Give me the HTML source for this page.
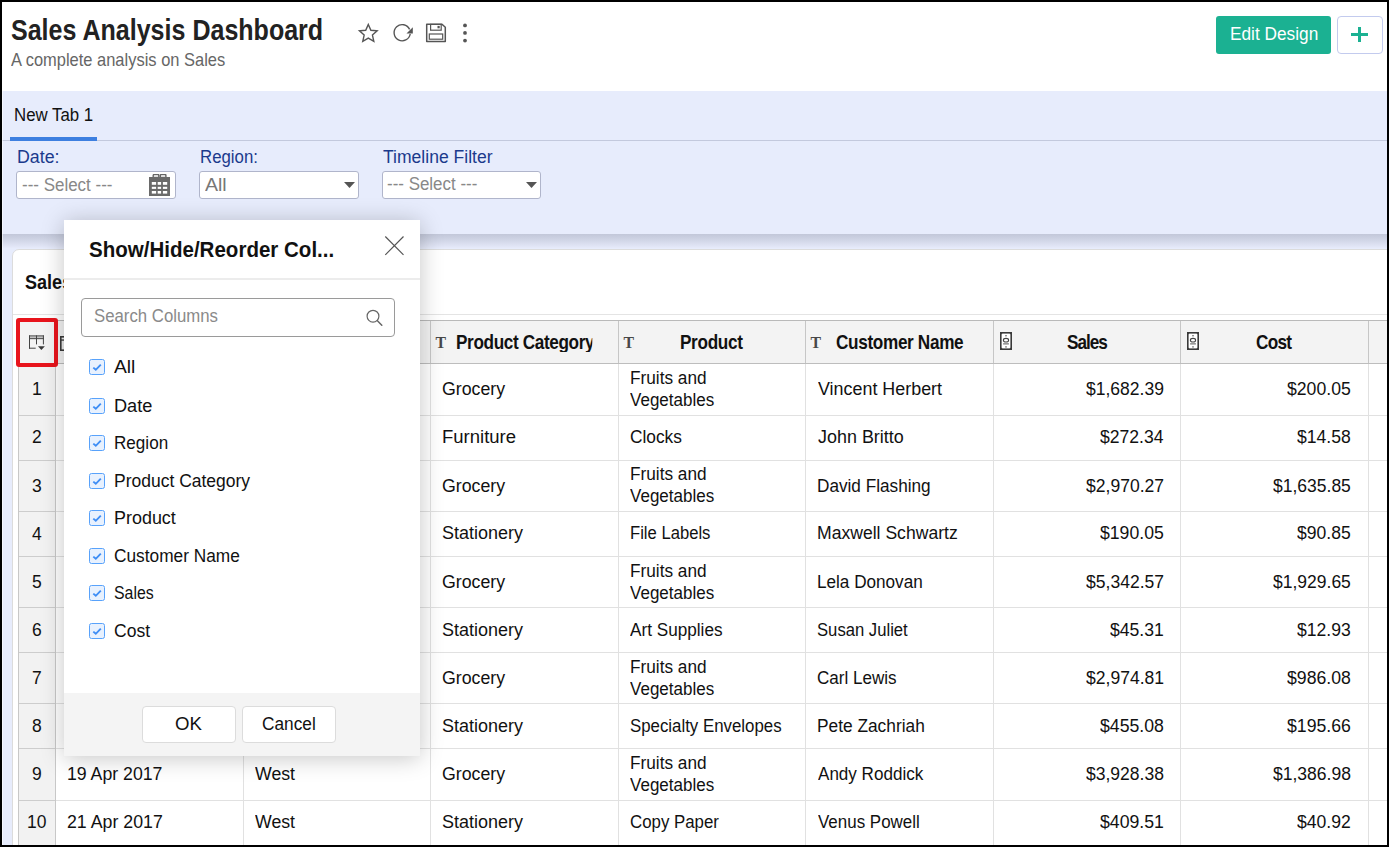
<!DOCTYPE html>
<html lang="en"><head><meta charset="utf-8"><title>Sales Analysis Dashboard</title>
<style>
html,body{margin:0;padding:0;}
body{width:1389px;height:847px;overflow:hidden;position:relative;background:#e7ecfc;font-family:"Liberation Sans",sans-serif;}
.b{position:absolute;display:block;}
.t{position:absolute;white-space:pre;line-height:1;transform-origin:0 0;display:block;}
</style></head><body>
<div class="b" style="left:0px;top:0px;width:1389px;height:91px;background:#fff;"></div>
<div class="b" style="left:0px;top:91px;width:1389px;height:143px;background:#e7ecfc;"></div>
<div class="b" style="left:0px;top:140px;width:1389px;height:1px;background:#c3c9dd;"></div>
<div class="b" style="left:10px;top:137px;width:87px;height:4px;background:#3d7fe0;"></div>
<div class="b" style="left:0px;top:234px;width:1389px;height:14px;background:linear-gradient(#c2c7d9,#cfd4e5 40%,#e6eafa);"></div>
<div class="b" style="left:16px;top:171px;width:160px;height:28px;background:#fff;border:1px solid #b0b5cb;border-radius:3px;box-sizing:border-box;"></div>
<div class="b" style="left:199px;top:171px;width:160px;height:28px;background:#fff;border:1px solid #b0b5cb;border-radius:3px;box-sizing:border-box;"></div>
<div class="b" style="left:382px;top:171px;width:159px;height:28px;background:#fff;border:1px solid #b0b5cb;border-radius:3px;box-sizing:border-box;"></div>
<svg class="b" style="left:344px;top:182px" width="11" height="6"><path d="M0 0H11L5.5 6Z" fill="#555"/></svg>
<svg class="b" style="left:526px;top:182px" width="11" height="6"><path d="M0 0H11L5.5 6Z" fill="#555"/></svg>
<svg class="b" style="left:149px;top:174px" width="21" height="22" viewBox="0 0 21 22">
<rect x="4.2" y="0.3" width="5.6" height="5" rx="1.2" fill="#ddd" stroke="#666" stroke-width="1.4"/>
<rect x="11.3" y="0.3" width="5.6" height="5" rx="1.2" fill="#ddd" stroke="#666" stroke-width="1.4"/>
<rect x="0" y="3" width="21" height="19" fill="#6a6a6a"/>
<g fill="#fff"><rect x="2.8" y="8" width="4.3" height="2.8"/><rect x="8.7" y="8" width="3.4" height="2.8"/><rect x="13.9" y="8" width="4.3" height="2.8"/>
<rect x="2.8" y="12.8" width="4.3" height="2.1"/><rect x="8.7" y="12.8" width="3.4" height="2.1"/><rect x="13.9" y="12.8" width="4.3" height="2.1"/>
<rect x="2.8" y="17" width="4.3" height="2.6"/><rect x="8.7" y="17" width="3.4" height="2.6"/><rect x="13.9" y="17" width="4.3" height="2.6"/></g></svg>
<svg class="b" style="left:357.1px;top:21.7px" width="22.6" height="22.6" viewBox="0 0 24 24"><path d="M12 2.6l2.75 6.2 6.65.65-5 4.45 1.45 6.6L12 17.05 6.15 20.5l1.45-6.6-5-4.45 6.65-.65z" fill="none" stroke="#555" stroke-width="1.5" stroke-linejoin="miter"/></svg>
<svg class="b" style="left:391px;top:21px" width="24" height="22" viewBox="0 0 24 22"><path d="M18.6 8.4A8.1 8.1 0 1 0 19.2 13" fill="none" stroke="#555" stroke-width="1.4"/><path d="M21.8 6.2v6.3h-6.3z" fill="#555"/></svg>
<svg class="b" style="left:425px;top:22px" width="22" height="22" viewBox="0 0 22 22"><path d="M1.7 2.2h15.3l3.3 3v14.2H1.7z" fill="none" stroke="#555" stroke-width="1.5" stroke-linejoin="round"/><rect x="5.6" y="2.4" width="10.6" height="5.8" fill="none" stroke="#555" stroke-width="1.2"/><rect x="12.5" y="3.9" width="2.2" height="2.4" fill="#555"/><rect x="4.3" y="12" width="13.4" height="5.2" fill="none" stroke="#555" stroke-width="1.2"/></svg>
<svg class="b" style="left:461px;top:22px" width="8" height="22" viewBox="0 0 8 22"><circle cx="4" cy="3.4" r="1.9" fill="#555"/><circle cx="4" cy="10.9" r="1.9" fill="#555"/><circle cx="4" cy="18.6" r="1.9" fill="#555"/></svg>
<div class="b" style="left:1216px;top:16px;width:115px;height:38px;background:#1bb192;border-radius:3px;"></div>
<div class="b" style="left:1337px;top:16px;width:46px;height:38px;background:#fff;border:1px solid #c3cbee;border-radius:4px;box-sizing:border-box;"></div>
<div class="b" style="left:1351px;top:33.1px;width:17px;height:2.6px;background:#1bb192;"></div>
<div class="b" style="left:1358.2px;top:26.7px;width:2.6px;height:15.4px;background:#1bb192;"></div>
<div class="b" style="left:12px;top:249px;width:1400px;height:620px;background:#fff;border:1px solid #dcdcdc;border-radius:7px;box-sizing:border-box;"></div>
<div class="b" style="left:13px;top:314px;width:1380px;height:1px;background:#e4e4e4;"></div>
<div class="b" style="left:18px;top:320px;width:1372px;height:44px;background:#f3f3f3;border-top:1px solid #b9b9b9;border-bottom:1px solid #bdbdbd;box-sizing:border-box;"></div>
<div class="b" style="left:18px;top:364px;width:38px;height:490px;background:#f2f2f2;"></div>
<div class="b" style="left:18px;top:415px;width:1372px;height:1px;background:#e1e1e1;"></div>
<div class="b" style="left:18px;top:415px;width:38px;height:1px;background:#cdcdcd;"></div>
<div class="b" style="left:18px;top:460px;width:1372px;height:1px;background:#e1e1e1;"></div>
<div class="b" style="left:18px;top:460px;width:38px;height:1px;background:#cdcdcd;"></div>
<div class="b" style="left:18px;top:511px;width:1372px;height:1px;background:#e1e1e1;"></div>
<div class="b" style="left:18px;top:511px;width:38px;height:1px;background:#cdcdcd;"></div>
<div class="b" style="left:18px;top:556px;width:1372px;height:1px;background:#e1e1e1;"></div>
<div class="b" style="left:18px;top:556px;width:38px;height:1px;background:#cdcdcd;"></div>
<div class="b" style="left:18px;top:607px;width:1372px;height:1px;background:#e1e1e1;"></div>
<div class="b" style="left:18px;top:607px;width:38px;height:1px;background:#cdcdcd;"></div>
<div class="b" style="left:18px;top:652px;width:1372px;height:1px;background:#e1e1e1;"></div>
<div class="b" style="left:18px;top:652px;width:38px;height:1px;background:#cdcdcd;"></div>
<div class="b" style="left:18px;top:703px;width:1372px;height:1px;background:#e1e1e1;"></div>
<div class="b" style="left:18px;top:703px;width:38px;height:1px;background:#cdcdcd;"></div>
<div class="b" style="left:18px;top:748px;width:1372px;height:1px;background:#e1e1e1;"></div>
<div class="b" style="left:18px;top:748px;width:38px;height:1px;background:#cdcdcd;"></div>
<div class="b" style="left:18px;top:800px;width:1372px;height:1px;background:#e1e1e1;"></div>
<div class="b" style="left:18px;top:800px;width:38px;height:1px;background:#cdcdcd;"></div>
<div class="b" style="left:18px;top:845px;width:1372px;height:1px;background:#e1e1e1;"></div>
<div class="b" style="left:18px;top:845px;width:38px;height:1px;background:#cdcdcd;"></div>
<div class="b" style="left:18px;top:364px;width:1px;height:490px;background:#c8c8c8;"></div>
<div class="b" style="left:18px;top:321px;width:1px;height:42px;background:#bcbcbc;"></div>
<div class="b" style="left:55px;top:364px;width:1px;height:490px;background:#c8c8c8;"></div>
<div class="b" style="left:55px;top:321px;width:1px;height:42px;background:#bcbcbc;"></div>
<div class="b" style="left:243px;top:364px;width:1px;height:490px;background:#e1e1e1;"></div>
<div class="b" style="left:243px;top:321px;width:1px;height:42px;background:#c6c6c6;"></div>
<div class="b" style="left:430px;top:364px;width:1px;height:490px;background:#e1e1e1;"></div>
<div class="b" style="left:430px;top:321px;width:1px;height:42px;background:#c6c6c6;"></div>
<div class="b" style="left:618px;top:364px;width:1px;height:490px;background:#e1e1e1;"></div>
<div class="b" style="left:618px;top:321px;width:1px;height:42px;background:#c6c6c6;"></div>
<div class="b" style="left:805px;top:364px;width:1px;height:490px;background:#e1e1e1;"></div>
<div class="b" style="left:805px;top:321px;width:1px;height:42px;background:#c6c6c6;"></div>
<div class="b" style="left:993px;top:364px;width:1px;height:490px;background:#e1e1e1;"></div>
<div class="b" style="left:993px;top:321px;width:1px;height:42px;background:#c6c6c6;"></div>
<div class="b" style="left:1180px;top:364px;width:1px;height:490px;background:#e1e1e1;"></div>
<div class="b" style="left:1180px;top:321px;width:1px;height:42px;background:#c6c6c6;"></div>
<div class="b" style="left:1368px;top:364px;width:1px;height:490px;background:#e1e1e1;"></div>
<div class="b" style="left:1368px;top:321px;width:1px;height:42px;background:#c6c6c6;"></div>
<svg class="b" style="left:1000px;top:332px" width="12" height="18" viewBox="0 0 12 18"><rect x=".8" y=".8" width="10.4" height="16.4" fill="#fff" stroke="#3a3a3a" stroke-width="1.6"/><path d="M0 0h3.6L0 3.6zM12 0v3.6L8.4 0zM0 18v-3.6L3.6 18zM12 18H8.400l3.600-3.600z" fill="#3a3a3a"/><ellipse cx="6" cy="8.2" rx="2.6" ry="1.8" fill="none" stroke="#444" stroke-width="1.1"/><rect x="3.1" y="11.4" width="5.800" height="1" fill="#555"/><rect x="5.3" y="3" width="1.4" height="1.4" fill="#666"/><rect x="5.3" y="14.200" width="1.4" height="1.4" fill="#666"/></svg>
<svg class="b" style="left:1187px;top:332px" width="12" height="18" viewBox="0 0 12 18"><rect x=".8" y=".8" width="10.4" height="16.4" fill="#fff" stroke="#3a3a3a" stroke-width="1.6"/><path d="M0 0h3.6L0 3.6zM12 0v3.6L8.4 0zM0 18v-3.6L3.6 18zM12 18H8.400l3.600-3.600z" fill="#3a3a3a"/><ellipse cx="6" cy="8.2" rx="2.6" ry="1.8" fill="none" stroke="#444" stroke-width="1.1"/><rect x="3.1" y="11.4" width="5.800" height="1" fill="#555"/><rect x="5.3" y="3" width="1.4" height="1.4" fill="#666"/><rect x="5.3" y="14.200" width="1.4" height="1.4" fill="#666"/></svg>
<svg class="b" style="left:60px;top:336px" width="12" height="15"><rect x=".8" y=".8" width="10.4" height="13.4" fill="#eee" stroke="#3a3a3a" stroke-width="1.6"/><rect x="1" y="3.4" width="10" height="1.3" fill="#3a3a3a"/></svg>
<svg class="b" style="left:29px;top:334.5px" width="17" height="16" viewBox="0 0 17 16"><rect x=".5" y="1.3" width="14" height="2.1" fill="#c2c2c2"/><path d="M0 .9H14.9M0 3.65H14.9M.5 .4V13.7M0 13.2H6.7M7.5 .4V9.4M14.4 .4V9.4" fill="none" stroke="#444" stroke-width="1"/><path d="M8.9 11.3h7l-3.5 3.7z" fill="#3a3a3a"/></svg>
<div class="b" style="left:16px;top:318px;width:42px;height:49px;border:4px solid #e8141c;border-radius:3px;box-sizing:border-box;z-index:5;"></div>
<div class="b" style="left:64px;top:220px;width:356px;height:536px;background:#fff;box-shadow:0 2px 22px rgba(0,0,0,.23);z-index:10;"></div>
<div class="b" style="left:64px;top:278px;width:356px;height:2px;background:#ececec;z-index:11;"></div>
<div class="b" style="left:64px;top:693px;width:356px;height:63px;background:#f4f4f4;z-index:11;"></div>
<div class="b" style="left:81px;top:298px;width:314px;height:39px;background:#fff;border:1px solid #9a9a9a;border-radius:4px;box-sizing:border-box;z-index:12;"></div>
<svg class="b" style="left:365px;top:308px;z-index:13" width="20" height="20" viewBox="0 0 20 20"><circle cx="8" cy="8.2" r="5.9" fill="none" stroke="#666" stroke-width="1.2"/><path d="M12.4 12.8L16.8 17.2" stroke="#666" stroke-width="1.5" stroke-linecap="round"/></svg>
<svg class="b" style="left:384px;top:235px;z-index:13" width="21" height="21" viewBox="0 0 21 21"><path d="M1.3 1.5L19.5 19.8M19.5 1.5L1.3 19.8" stroke="#555" stroke-width="1.2"/></svg>
<div class="b" style="left:89px;top:359px;width:16px;height:16px;box-sizing:border-box;border:1px solid #58a2fb;border-radius:2.5px;background:#e8f1fe;z-index:12"><svg width="14" height="14" viewBox="0 0 14 14" style="display:block"><path d="M3.3 7.6L5.8 9.8L10.8 4.6" fill="none" stroke="#3f8ef5" stroke-width="1.9"/></svg></div>
<div class="b" style="left:89px;top:398px;width:16px;height:16px;box-sizing:border-box;border:1px solid #58a2fb;border-radius:2.5px;background:#e8f1fe;z-index:12"><svg width="14" height="14" viewBox="0 0 14 14" style="display:block"><path d="M3.3 7.6L5.8 9.8L10.8 4.6" fill="none" stroke="#3f8ef5" stroke-width="1.9"/></svg></div>
<div class="b" style="left:89px;top:435px;width:16px;height:16px;box-sizing:border-box;border:1px solid #58a2fb;border-radius:2.5px;background:#e8f1fe;z-index:12"><svg width="14" height="14" viewBox="0 0 14 14" style="display:block"><path d="M3.3 7.6L5.8 9.8L10.8 4.6" fill="none" stroke="#3f8ef5" stroke-width="1.9"/></svg></div>
<div class="b" style="left:89px;top:473px;width:16px;height:16px;box-sizing:border-box;border:1px solid #58a2fb;border-radius:2.5px;background:#e8f1fe;z-index:12"><svg width="14" height="14" viewBox="0 0 14 14" style="display:block"><path d="M3.3 7.6L5.8 9.8L10.8 4.6" fill="none" stroke="#3f8ef5" stroke-width="1.9"/></svg></div>
<div class="b" style="left:89px;top:510px;width:16px;height:16px;box-sizing:border-box;border:1px solid #58a2fb;border-radius:2.5px;background:#e8f1fe;z-index:12"><svg width="14" height="14" viewBox="0 0 14 14" style="display:block"><path d="M3.3 7.6L5.8 9.8L10.8 4.6" fill="none" stroke="#3f8ef5" stroke-width="1.9"/></svg></div>
<div class="b" style="left:89px;top:548px;width:16px;height:16px;box-sizing:border-box;border:1px solid #58a2fb;border-radius:2.5px;background:#e8f1fe;z-index:12"><svg width="14" height="14" viewBox="0 0 14 14" style="display:block"><path d="M3.3 7.6L5.8 9.8L10.8 4.6" fill="none" stroke="#3f8ef5" stroke-width="1.9"/></svg></div>
<div class="b" style="left:89px;top:585px;width:16px;height:16px;box-sizing:border-box;border:1px solid #58a2fb;border-radius:2.5px;background:#e8f1fe;z-index:12"><svg width="14" height="14" viewBox="0 0 14 14" style="display:block"><path d="M3.3 7.6L5.8 9.8L10.8 4.6" fill="none" stroke="#3f8ef5" stroke-width="1.9"/></svg></div>
<div class="b" style="left:89px;top:623px;width:16px;height:16px;box-sizing:border-box;border:1px solid #58a2fb;border-radius:2.5px;background:#e8f1fe;z-index:12"><svg width="14" height="14" viewBox="0 0 14 14" style="display:block"><path d="M3.3 7.6L5.8 9.8L10.8 4.6" fill="none" stroke="#3f8ef5" stroke-width="1.9"/></svg></div>
<div class="b" style="left:142px;top:706px;width:94px;height:37px;background:#fff;border:1px solid #dcdcdc;border-radius:4px;box-sizing:border-box;z-index:12;"></div>
<div class="b" style="left:242px;top:706px;width:94px;height:37px;background:#fff;border:1px solid #dcdcdc;border-radius:4px;box-sizing:border-box;z-index:12;"></div>
<div class="b" style="left:0px;top:0px;width:1389px;height:2px;background:#000;z-index:50;"></div>
<div class="b" style="left:0px;top:845px;width:1389px;height:2px;background:#000;z-index:50;"></div>
<div class="b" style="left:0px;top:0px;width:2px;height:847px;background:#000;z-index:50;"></div>
<div class="b" style="left:1387px;top:0px;width:2px;height:847px;background:#000;z-index:50;"></div>
<div class="b" style="left:2px;top:2px;width:1px;height:843px;background:rgba(255,255,255,.6);z-index:49;"></div>
<span class="t" style="left:11.11px;top:16.00px;font-size:29.19px;color:#222;transform:scaleX(0.8577);font-weight:700;">Sales Analysis Dashboard</span>
<span class="t" style="left:11.00px;top:51.70px;font-size:17.59px;color:#666;transform:scaleX(0.9369);">A complete analysis on Sales</span>
<span class="t" style="left:13.60px;top:106.30px;font-size:18.11px;color:#111;transform:scaleX(0.9293);">New Tab 1</span>
<span class="t" style="left:16.53px;top:148.00px;font-size:18.11px;color:#1b3a8c;transform:scaleX(0.9813);">Date:</span>
<span class="t" style="left:199.60px;top:148.00px;font-size:18.11px;color:#1b3a8c;transform:scaleX(0.9278);">Region:</span>
<span class="t" style="left:382.61px;top:148.00px;font-size:18.11px;color:#1b3a8c;transform:scaleX(0.9688);">Timeline Filter</span>
<span class="t" style="left:21.95px;top:176.20px;font-size:18.11px;color:#888;transform:scaleX(0.9364);">--- Select ---</span>
<span class="t" style="left:205.20px;top:176.20px;font-size:18.11px;color:#777;transform:scaleX(1.0788);">All</span>
<span class="t" style="left:387.25px;top:175.30px;font-size:18.11px;color:#888;transform:scaleX(0.9353);">--- Select ---</span>
<span class="t" style="left:1229.87px;top:25.00px;font-size:18.11px;color:#fff;transform:scaleX(0.9530);">Edit Design</span>
<span class="t" style="left:25.23px;top:272.70px;font-size:19.41px;color:#111;transform:scaleX(0.9300);font-weight:700;">Sales</span>
<span class="t" style="left:128.94px;top:332.60px;font-size:19.41px;color:#111;transform:scaleX(0.8850);letter-spacing:0.134px;font-weight:700;">Date</span>
<span class="t" style="left:306.94px;top:332.60px;font-size:19.41px;color:#111;transform:scaleX(0.8850);letter-spacing:0.424px;font-weight:700;">Region</span>
<span class="t" style="left:456.14px;top:332.60px;font-size:19.41px;color:#111;transform:scaleX(0.8850);letter-spacing:-0.420px;font-weight:700;width:154.42px;overflow:hidden;">Product Category</span>
<span class="t" style="left:680.24px;top:332.60px;font-size:19.41px;color:#111;transform:scaleX(0.8850);letter-spacing:-0.374px;font-weight:700;">Product</span>
<span class="t" style="left:835.58px;top:332.60px;font-size:19.41px;color:#111;transform:scaleX(0.8850);letter-spacing:-0.385px;font-weight:700;">Customer Name</span>
<span class="t" style="left:1066.86px;top:332.60px;font-size:19.41px;color:#111;transform:scaleX(0.8850);letter-spacing:-1.170px;font-weight:700;">Sales</span>
<span class="t" style="left:1256.18px;top:332.60px;font-size:19.41px;color:#111;transform:scaleX(0.8850);letter-spacing:-0.793px;font-weight:700;">Cost</span>
<span class="t" style="left:248.50px;top:335.10px;font-size:15.8px;color:#484848;transform:scaleX(1.0000);font-weight:700;font-family:'Liberation Serif',serif;">T</span>
<span class="t" style="left:435.60px;top:335.10px;font-size:15.8px;color:#484848;transform:scaleX(1.0000);font-weight:700;font-family:'Liberation Serif',serif;">T</span>
<span class="t" style="left:623.50px;top:335.10px;font-size:15.8px;color:#484848;transform:scaleX(1.0000);font-weight:700;font-family:'Liberation Serif',serif;">T</span>
<span class="t" style="left:810.50px;top:335.10px;font-size:15.8px;color:#484848;transform:scaleX(1.0000);font-weight:700;font-family:'Liberation Serif',serif;">T</span>
<span class="t" style="left:32.34px;top:380.20px;font-size:18.11px;color:#111;transform:scaleX(0.9650);">1</span>
<span class="t" style="left:67.24px;top:380.00px;font-size:18.11px;color:#111;transform:scaleX(0.9400);">03 Jan 2017</span>
<span class="t" style="left:254.08px;top:380.00px;font-size:18.11px;color:#111;transform:scaleX(0.9400);">East</span>
<span class="t" style="left:441.92px;top:380.00px;font-size:18.11px;color:#111;transform:scaleX(0.9804);">Grocery</span>
<span class="t" style="left:629.87px;top:368.70px;font-size:18.11px;color:#111;transform:scaleX(0.9507);">Fruits and</span>
<span class="t" style="left:630.40px;top:390.80px;font-size:18.11px;color:#111;transform:scaleX(0.9397);">Vegetables</span>
<span class="t" style="left:817.90px;top:380.00px;font-size:18.11px;color:#111;transform:scaleX(0.9883);">Vincent Herbert</span>
<span class="t" style="left:1086.00px;top:380.00px;font-size:18.11px;color:#111;transform:scaleX(0.9675);">$1,682.39</span>
<span class="t" style="left:1287.00px;top:380.00px;font-size:18.11px;color:#111;transform:scaleX(0.9739);">$200.05</span>
<span class="t" style="left:32.34px;top:427.80px;font-size:18.11px;color:#111;transform:scaleX(0.9650);">2</span>
<span class="t" style="left:67.24px;top:427.60px;font-size:18.11px;color:#111;transform:scaleX(0.9400);">04 Jan 2017</span>
<span class="t" style="left:255.40px;top:427.60px;font-size:18.11px;color:#111;transform:scaleX(0.9781);">West</span>
<span class="t" style="left:441.77px;top:427.60px;font-size:18.11px;color:#111;transform:scaleX(1.0214);">Furniture</span>
<span class="t" style="left:629.54px;top:427.60px;font-size:18.11px;color:#111;transform:scaleX(0.9549);">Clocks</span>
<span class="t" style="left:817.70px;top:427.60px;font-size:18.11px;color:#111;transform:scaleX(0.9907);">John Britto</span>
<span class="t" style="left:1100.10px;top:427.60px;font-size:18.11px;color:#111;transform:scaleX(0.9709);">$272.34</span>
<span class="t" style="left:1297.10px;top:427.60px;font-size:18.11px;color:#111;transform:scaleX(0.9703);">$14.58</span>
<span class="t" style="left:32.34px;top:477.20px;font-size:18.11px;color:#111;transform:scaleX(0.9650);">3</span>
<span class="t" style="left:67.24px;top:477.00px;font-size:18.11px;color:#111;transform:scaleX(0.9400);">08 Jan 2017</span>
<span class="t" style="left:254.55px;top:477.00px;font-size:18.11px;color:#111;transform:scaleX(0.9400);">Central</span>
<span class="t" style="left:441.92px;top:477.00px;font-size:18.11px;color:#111;transform:scaleX(0.9804);">Grocery</span>
<span class="t" style="left:629.87px;top:464.70px;font-size:18.11px;color:#111;transform:scaleX(0.9507);">Fruits and</span>
<span class="t" style="left:630.40px;top:487.00px;font-size:18.11px;color:#111;transform:scaleX(0.9397);">Vegetables</span>
<span class="t" style="left:816.57px;top:477.00px;font-size:18.11px;color:#111;transform:scaleX(0.9488);">David Flashing</span>
<span class="t" style="left:1086.00px;top:477.00px;font-size:18.11px;color:#111;transform:scaleX(0.9687);">$2,970.27</span>
<span class="t" style="left:1272.90px;top:477.00px;font-size:18.11px;color:#111;transform:scaleX(0.9663);">$1,635.85</span>
<span class="t" style="left:32.34px;top:524.60px;font-size:18.11px;color:#111;transform:scaleX(0.9650);">4</span>
<span class="t" style="left:66.68px;top:524.40px;font-size:18.11px;color:#111;transform:scaleX(0.9400);">12 Jan 2017</span>
<span class="t" style="left:254.08px;top:524.40px;font-size:18.11px;color:#111;transform:scaleX(0.9400);">East</span>
<span class="t" style="left:441.51px;top:524.40px;font-size:18.11px;color:#111;transform:scaleX(0.9928);">Stationery</span>
<span class="t" style="left:629.91px;top:524.40px;font-size:18.11px;color:#111;transform:scaleX(0.9179);">File Labels</span>
<span class="t" style="left:816.54px;top:524.40px;font-size:18.11px;color:#111;transform:scaleX(0.9709);">Maxwell Schwartz</span>
<span class="t" style="left:1100.10px;top:524.40px;font-size:18.11px;color:#111;transform:scaleX(0.9739);">$190.05</span>
<span class="t" style="left:1297.10px;top:524.40px;font-size:18.11px;color:#111;transform:scaleX(0.9686);">$90.85</span>
<span class="t" style="left:32.34px;top:573.00px;font-size:18.11px;color:#111;transform:scaleX(0.9650);">5</span>
<span class="t" style="left:66.68px;top:572.80px;font-size:18.11px;color:#111;transform:scaleX(0.9400);">19 Feb 2017</span>
<span class="t" style="left:255.40px;top:572.80px;font-size:18.11px;color:#111;transform:scaleX(0.9781);">West</span>
<span class="t" style="left:441.92px;top:572.80px;font-size:18.11px;color:#111;transform:scaleX(0.9804);">Grocery</span>
<span class="t" style="left:629.87px;top:561.80px;font-size:18.11px;color:#111;transform:scaleX(0.9507);">Fruits and</span>
<span class="t" style="left:630.40px;top:583.90px;font-size:18.11px;color:#111;transform:scaleX(0.9397);">Vegetables</span>
<span class="t" style="left:816.58px;top:572.80px;font-size:18.11px;color:#111;transform:scaleX(0.9461);">Lela Donovan</span>
<span class="t" style="left:1086.00px;top:572.80px;font-size:18.11px;color:#111;transform:scaleX(0.9687);">$5,342.57</span>
<span class="t" style="left:1272.90px;top:572.80px;font-size:18.11px;color:#111;transform:scaleX(0.9663);">$1,929.65</span>
<span class="t" style="left:32.34px;top:620.70px;font-size:18.11px;color:#111;transform:scaleX(0.9650);">6</span>
<span class="t" style="left:67.24px;top:620.50px;font-size:18.11px;color:#111;transform:scaleX(0.9400);">02 Mar 2017</span>
<span class="t" style="left:254.55px;top:620.50px;font-size:18.11px;color:#111;transform:scaleX(0.9400);">Central</span>
<span class="t" style="left:441.51px;top:620.50px;font-size:18.11px;color:#111;transform:scaleX(0.9928);">Stationery</span>
<span class="t" style="left:630.40px;top:620.50px;font-size:18.11px;color:#111;transform:scaleX(0.9476);">Art Supplies</span>
<span class="t" style="left:817.16px;top:620.50px;font-size:18.11px;color:#111;transform:scaleX(0.9199);">Susan Juliet</span>
<span class="t" style="left:1110.20px;top:620.50px;font-size:18.11px;color:#111;transform:scaleX(0.9721);">$45.31</span>
<span class="t" style="left:1297.10px;top:620.50px;font-size:18.11px;color:#111;transform:scaleX(0.9703);">$12.93</span>
<span class="t" style="left:32.34px;top:669.20px;font-size:18.11px;color:#111;transform:scaleX(0.9650);">7</span>
<span class="t" style="left:66.68px;top:669.00px;font-size:18.11px;color:#111;transform:scaleX(0.9400);">11 Mar 2017</span>
<span class="t" style="left:254.08px;top:669.00px;font-size:18.11px;color:#111;transform:scaleX(0.9400);">East</span>
<span class="t" style="left:441.92px;top:669.00px;font-size:18.11px;color:#111;transform:scaleX(0.9804);">Grocery</span>
<span class="t" style="left:629.87px;top:658.10px;font-size:18.11px;color:#111;transform:scaleX(0.9507);">Fruits and</span>
<span class="t" style="left:630.40px;top:680.10px;font-size:18.11px;color:#111;transform:scaleX(0.9397);">Vegetables</span>
<span class="t" style="left:817.05px;top:669.00px;font-size:18.11px;color:#111;transform:scaleX(0.9412);">Carl Lewis</span>
<span class="t" style="left:1086.00px;top:669.00px;font-size:18.11px;color:#111;transform:scaleX(0.9687);">$2,974.81</span>
<span class="t" style="left:1287.00px;top:669.00px;font-size:18.11px;color:#111;transform:scaleX(0.9754);">$986.08</span>
<span class="t" style="left:32.34px;top:717.20px;font-size:18.11px;color:#111;transform:scaleX(0.9650);">8</span>
<span class="t" style="left:67.05px;top:717.00px;font-size:18.11px;color:#111;transform:scaleX(0.9400);">25 Mar 2017</span>
<span class="t" style="left:255.40px;top:717.00px;font-size:18.11px;color:#111;transform:scaleX(0.9781);">West</span>
<span class="t" style="left:441.51px;top:717.00px;font-size:18.11px;color:#111;transform:scaleX(0.9928);">Stationery</span>
<span class="t" style="left:629.66px;top:717.00px;font-size:18.11px;color:#111;transform:scaleX(0.9293);">Specialty Envelopes</span>
<span class="t" style="left:816.56px;top:717.00px;font-size:18.11px;color:#111;transform:scaleX(0.9558);">Pete Zachriah</span>
<span class="t" style="left:1100.10px;top:717.00px;font-size:18.11px;color:#111;transform:scaleX(0.9754);">$455.08</span>
<span class="t" style="left:1287.00px;top:717.00px;font-size:18.11px;color:#111;transform:scaleX(0.9754);">$195.66</span>
<span class="t" style="left:32.34px;top:765.30px;font-size:18.11px;color:#111;transform:scaleX(0.9650);">9</span>
<span class="t" style="left:67.13px;top:765.10px;font-size:18.11px;color:#111;transform:scaleX(0.9772);">19 Apr 2017</span>
<span class="t" style="left:255.40px;top:765.10px;font-size:18.11px;color:#111;transform:scaleX(0.9781);">West</span>
<span class="t" style="left:441.92px;top:765.10px;font-size:18.11px;color:#111;transform:scaleX(0.9804);">Grocery</span>
<span class="t" style="left:629.87px;top:754.10px;font-size:18.11px;color:#111;transform:scaleX(0.9507);">Fruits and</span>
<span class="t" style="left:630.40px;top:776.10px;font-size:18.11px;color:#111;transform:scaleX(0.9397);">Vegetables</span>
<span class="t" style="left:817.90px;top:765.10px;font-size:18.11px;color:#111;transform:scaleX(0.9420);">Andy Roddick</span>
<span class="t" style="left:1086.00px;top:765.10px;font-size:18.11px;color:#111;transform:scaleX(0.9675);">$3,928.38</span>
<span class="t" style="left:1272.90px;top:765.10px;font-size:18.11px;color:#111;transform:scaleX(0.9675);">$1,386.98</span>
<span class="t" style="left:27.48px;top:813.20px;font-size:18.11px;color:#111;transform:scaleX(0.9650);">10</span>
<span class="t" style="left:66.82px;top:813.00px;font-size:18.11px;color:#111;transform:scaleX(0.9804);">21 Apr 2017</span>
<span class="t" style="left:255.40px;top:813.00px;font-size:18.11px;color:#111;transform:scaleX(0.9781);">West</span>
<span class="t" style="left:441.51px;top:813.00px;font-size:18.11px;color:#111;transform:scaleX(0.9928);">Stationery</span>
<span class="t" style="left:629.56px;top:813.00px;font-size:18.11px;color:#111;transform:scaleX(0.9302);">Copy Paper</span>
<span class="t" style="left:817.90px;top:813.00px;font-size:18.11px;color:#111;transform:scaleX(0.9358);">Venus Powell</span>
<span class="t" style="left:1100.10px;top:813.00px;font-size:18.11px;color:#111;transform:scaleX(0.9769);">$409.51</span>
<span class="t" style="left:1297.10px;top:813.00px;font-size:18.11px;color:#111;transform:scaleX(0.9721);">$40.92</span>
<span class="t" style="left:89.14px;top:238.80px;font-size:21.99px;color:#111;transform:scaleX(0.9337);font-weight:700;z-index:20;">Show/Hide/Reorder Col...</span>
<span class="t" style="left:93.86px;top:307.00px;font-size:18.11px;color:#8a8a8a;transform:scaleX(0.9259);z-index:20;">Search Columns</span>
<span class="t" style="left:114.00px;top:358.10px;font-size:18.11px;color:#111;transform:scaleX(1.0630);z-index:20;">All</span>
<span class="t" style="left:113.90px;top:397.10px;font-size:18.11px;color:#111;transform:scaleX(1.0033);z-index:20;">Date</span>
<span class="t" style="left:113.98px;top:434.10px;font-size:18.11px;color:#111;transform:scaleX(0.9432);z-index:20;">Region</span>
<span class="t" style="left:113.95px;top:471.90px;font-size:18.11px;color:#111;transform:scaleX(0.9658);z-index:20;">Product Category</span>
<span class="t" style="left:113.91px;top:508.90px;font-size:18.11px;color:#111;transform:scaleX(0.9905);z-index:20;">Product</span>
<span class="t" style="left:113.74px;top:547.10px;font-size:18.11px;color:#111;transform:scaleX(0.9542);z-index:20;">Customer Name</span>
<span class="t" style="left:113.90px;top:584.10px;font-size:18.11px;color:#111;transform:scaleX(0.8758);z-index:20;">Sales</span>
<span class="t" style="left:113.73px;top:621.90px;font-size:18.11px;color:#111;transform:scaleX(0.9667);z-index:20;">Cost</span>
<span class="t" style="left:175.38px;top:714.80px;font-size:18.11px;color:#111;transform:scaleX(1.0283);z-index:20;">OK</span>
<span class="t" style="left:262.34px;top:714.80px;font-size:18.11px;color:#111;transform:scaleX(0.9531);z-index:20;">Cancel</span>
</body></html>
